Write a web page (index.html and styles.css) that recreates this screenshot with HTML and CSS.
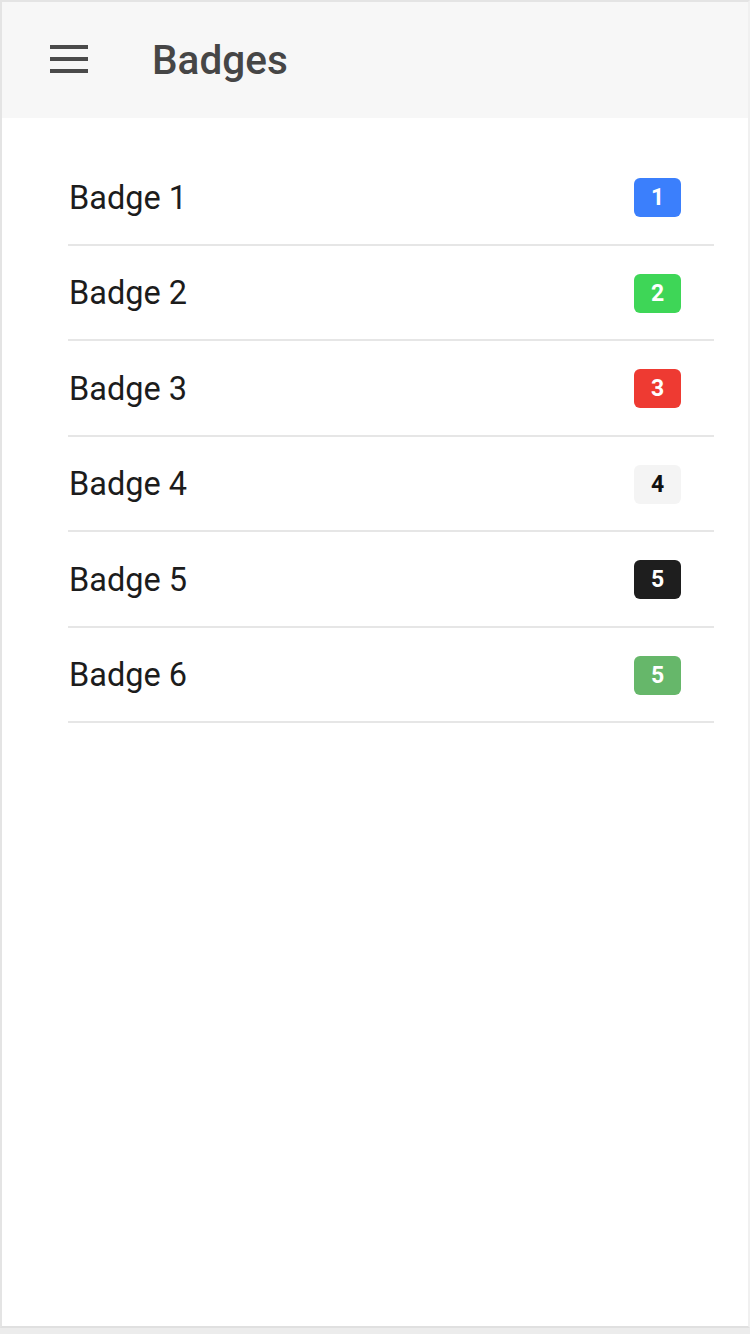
FILE: index.html
```html
<!DOCTYPE html>
<html lang="en">
<head>
<meta charset="utf-8">
<title>Badges</title>
<link rel="stylesheet" href="styles.css">
</head>
<body>
<div class="device">
  <header class="toolbar">
    <button class="menu" aria-label="menu">
      <svg width="38" height="28" viewBox="0 0 38 28"><rect x="0" y="0" width="38" height="4" fill="#4a4a4a"/><rect x="0" y="12" width="38" height="4" fill="#4a4a4a"/><rect x="0" y="24" width="38" height="4" fill="#4a4a4a"/></svg>
    </button>
    <h1 class="title">Badges</h1>
  </header>
  <main class="content">
    <ul class="list">
      <li class="item"><span class="label">Badge 1</span><span class="badge primary">1</span></li>
      <li class="item"><span class="label">Badge 2</span><span class="badge secondary">2</span></li>
      <li class="item"><span class="label">Badge 3</span><span class="badge danger">3</span></li>
      <li class="item"><span class="label">Badge 4</span><span class="badge light">4</span></li>
      <li class="item"><span class="label">Badge 5</span><span class="badge dark">5</span></li>
      <li class="item"><span class="label">Badge 6</span><span class="badge custom">5</span></li>
    </ul>
  </main>
</div>
</body>
</html>
```
FILE: styles.css
```css
html, body {
  margin: 0;
  padding: 0;
  background: #ececec;
  font-family: Roboto, "Noto Sans", Arial, sans-serif;
}
.device {
  box-sizing: border-box;
  width: 750px;
  height: 1328px;
  background: #ffffff;
  border-top: 2px solid #e4e4e4;
  border-left: 2px solid #e4e4e4;
  border-bottom: 2px solid #e0e0e0;
  border-right: 2px solid #f0f0f0;
  display: flex;
  flex-direction: column;
}
.toolbar {
  height: 116px;
  background: #f7f7f7;
  display: flex;
  align-items: center;
  flex-shrink: 0;
}
.menu {
  border: 0;
  background: transparent;
  padding: 0;
  margin: 0 0 2px 48px;
  width: 38px;
  height: 28px;
  display: flex;
}
.title {
  margin: 0 0 0 64px;
  font-size: 40.5px;
  font-weight: 500;
  color: #464646;
  line-height: 1;
}
.content {
  flex: 1;
  background: #fff;
}
.list {
  list-style: none;
  margin: 32px 34px 0 66px;
  padding: 0;
}
.item {
  height: 91.5px;
  padding-top: 2px;
  display: flex;
  align-items: center;
  justify-content: space-between;
  border-bottom: 2px solid #e6e6e6;
  padding-right: 33px;
}
.label {
  font-size: 32.5px;
  color: #1c1c1c;
  padding-left: 1px;
}
.badge {
  width: 47px;
  height: 39px;
  border-radius: 6px;
  display: flex;
  align-items: center;
  justify-content: center;
  font-size: 23px;
  font-weight: 700;
  color: #fff;
}
.primary { background: #3b7ffc; }
.secondary { background: #3ed657; }
.danger { background: #ee3a32; }
.light { background: #f4f4f4; color: #111; }
.dark { background: #1e1e1e; }
.custom { background: #66b76a; }
```
